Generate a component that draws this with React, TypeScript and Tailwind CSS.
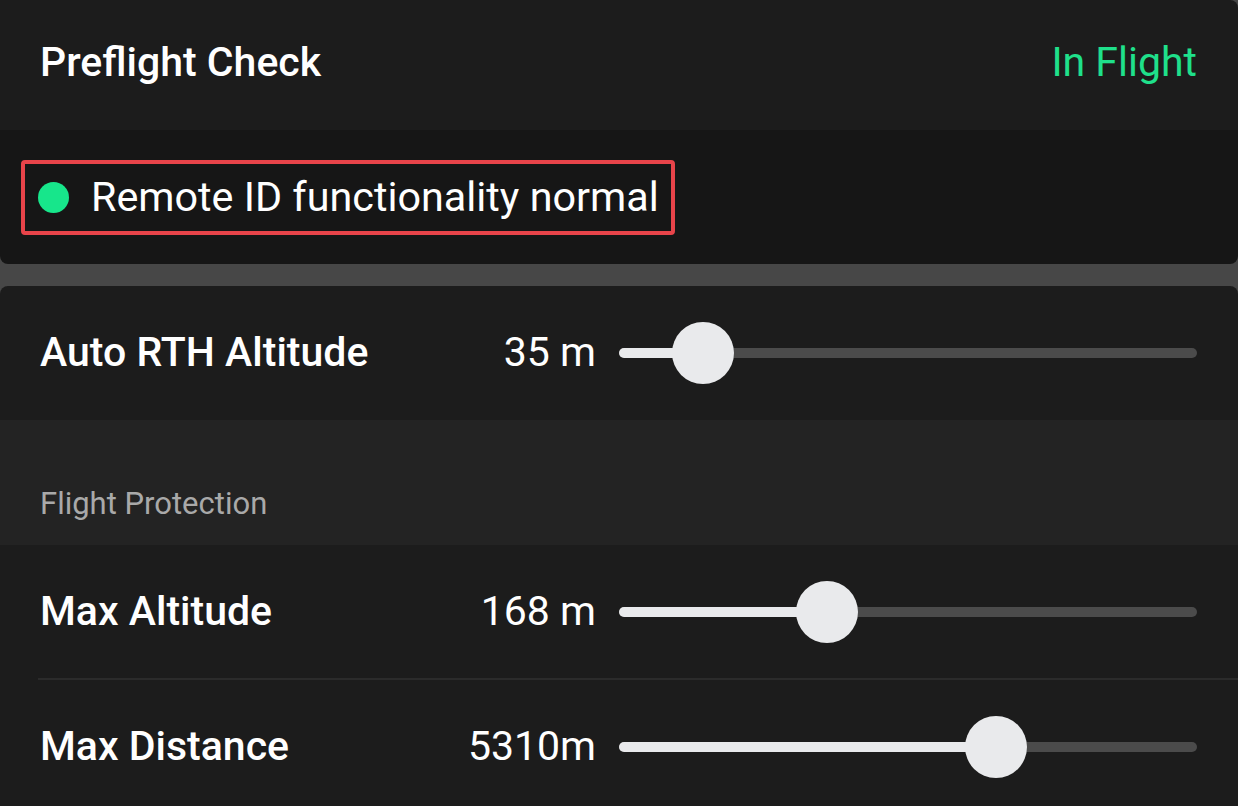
import React from 'react'

type SliderRowProps = {
  label: string
  value: string
  percent: number
  height: string
}

function SliderRow({ label, value, percent, height }: SliderRowProps) {
  return (
    <div className={`flex ${height} items-center pl-10 pr-[41px]`}>
      <div className="w-[330px] shrink-0 whitespace-nowrap text-[41px] font-medium text-white">{label}</div>
      <div className="w-[226px] shrink-0 whitespace-nowrap text-right text-[41px] text-white">{value}</div>
      <div className="relative ml-[23px] h-[10px] flex-1 rounded-full bg-[#4b4b4b]">
        <div className="absolute left-0 top-0 h-full rounded-full bg-[#e9eaec]" style={{ width: `${percent}%` }} />
        <div
          className="absolute top-1/2 h-[62px] w-[62px] -translate-x-1/2 -translate-y-1/2 rounded-full bg-[#e9eaec]"
          style={{ left: `${percent}%` }}
        />
      </div>
    </div>
  )
}

export default function App() {
  return (
    <div className="h-[806px] w-[1238px] overflow-hidden bg-[#474747] font-['Roboto',sans-serif]">
      <div className="overflow-hidden rounded-b-lg rounded-tr-lg">
        <div className="flex h-[130px] items-center justify-between bg-[#1c1c1c] pb-1 pl-10 pr-[41px]">
          <div className="text-[41px] font-medium text-white">Preflight Check</div>
          <div className="text-[41px] text-[#1fe08b]">In Flight</div>
        </div>
        <div className="h-[134px] bg-[#161616] pl-[21px] pt-[30px]">
          <div className="flex h-[75px] w-[654px] items-center gap-[22px] rounded-[4px] border-[4px] border-[#e8444a] pl-[13px]">
            <span className="h-[31px] w-[31px] shrink-0 rounded-full bg-[#17e68b]" />
            <span className="whitespace-nowrap text-[41.3px] text-white">Remote ID functionality normal</span>
          </div>
        </div>
      </div>

      <div className="mt-[22px] overflow-hidden rounded-t-lg">
        <div className="bg-[#1c1c1c]">
          <SliderRow label="Auto RTH Altitude" value="35 m" percent={14.5} height="h-[134px]" />
        </div>
        <div className="flex h-[125px] items-end bg-[#232323] pb-[18px] pl-10">
          <div className="text-[31px] text-[#a9a9a9]">Flight Protection</div>
        </div>
        <div className="bg-[#1c1c1c]">
          <SliderRow label="Max Altitude" value="168 m" percent={36} height="h-[133px]" />
          <div className="ml-[38px] h-[2px] bg-[#2b2b2b]" />
          <SliderRow label="Max Distance" value="5310m" percent={65.2} height="h-[134px]" />
        </div>
      </div>
    </div>
  )
}
